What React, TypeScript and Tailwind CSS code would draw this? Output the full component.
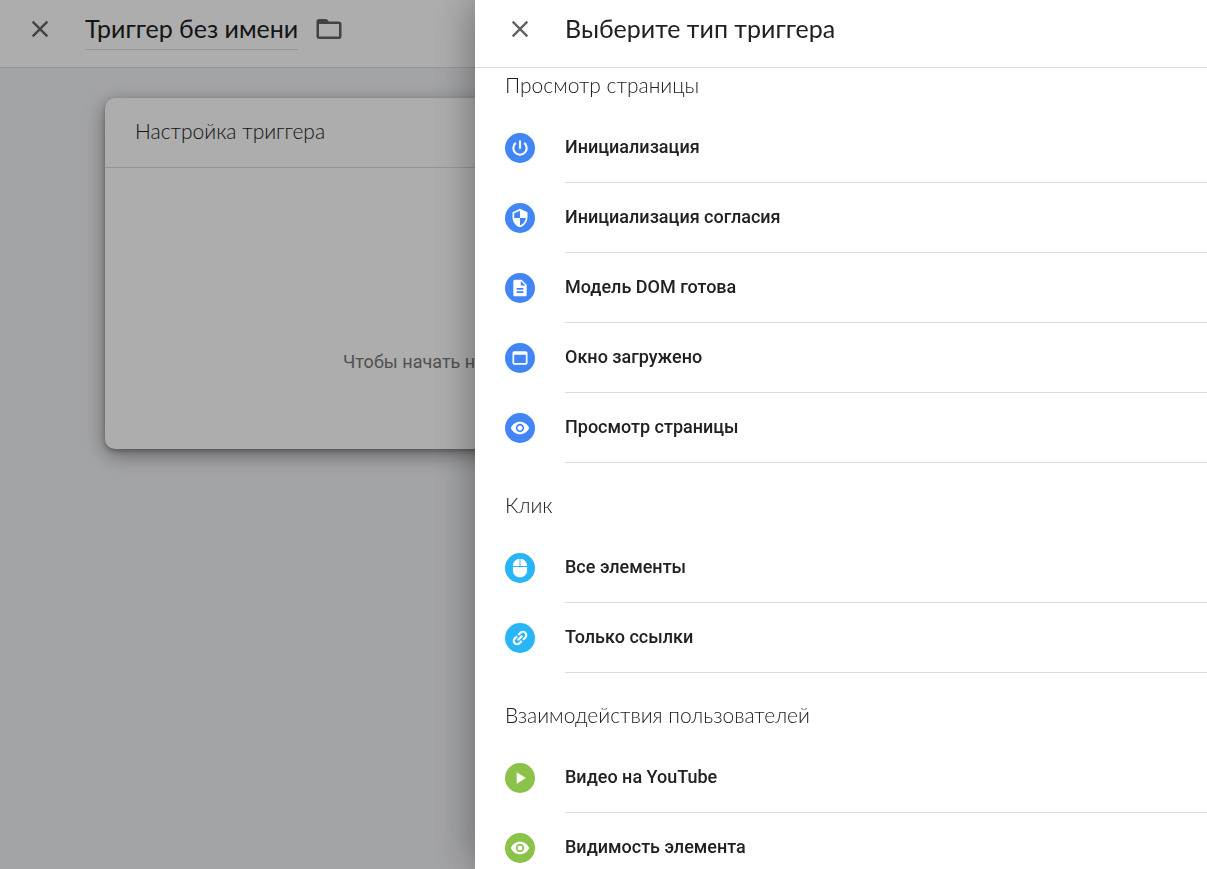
import React from "react";
import { IconType } from "react-icons";
import {
  MdClose,
  MdFolderOpen,
  MdPlayArrow,
  MdVisibility,
  MdWebAsset,
} from "react-icons/md";

interface TriggerType {
  label: string;
  icon: React.FC<{ className?: string }> | IconType;
}

interface TriggerGroup {
  title: string;
  color: string;
  types: TriggerType[];
}

const PowerIcon: React.FC<{ className?: string }> = ({ className }) => (
  <svg
    viewBox="0 0 24 24"
    fill="none"
    stroke="currentColor"
    strokeWidth="2.5"
    className={className}
  >
    <path d="M12 3v10M17.100 5.900A8 8 0 1 1 6.900 5.900" />
  </svg>
);

const ShieldIcon: React.FC<{ className?: string }> = ({ className }) => (
  <svg viewBox="0 0 24 24" fill="currentColor" className={className}>
    <path d="M12 1 3 5v6c0 5.55 3.84 10.74 9 12 5.16-1.26 9-6.45 9-12V5l-9-4zm0 10.99h7c-.53 4.12-3.28 7.79-7 8.94V12H5V6.3l7-3.11v8.8z" />
  </svg>
);

const DocumentIcon: React.FC<{ className?: string }> = ({ className }) => (
  <svg viewBox="0 0 24 24" fill="currentColor" className={className}>
    <path d="M14 2H6c-1.1 0-2 .9-2 2v16c0 1.1.9 2 2 2h12c1.1 0 2-.9 2-2V8l-6-6zm2 16H8v-2h8v2zm0-4H8v-2h8v2zm-3-5V3.5L18.5 9H13z" />
  </svg>
);

const MouseIcon: React.FC<{ className?: string }> = ({ className }) => (
  <svg viewBox="0 0 24 24" fill="currentColor" className={className}>
    <path d="M12.6 1v8.6h7.9C20.500 4.900 17 1.300 12.600 1zM3.500 15c0 4.600 3.700 8.200 8.500 8.200s8.500-3.600 8.500-8.200v-4.200h-17V15zM11.400 1C7 1.300 3.500 4.900 3.500 9.600h7.900V1z" />
  </svg>
);

const LinkIcon: React.FC<{ className?: string }> = ({ className }) => (
  <svg
    viewBox="0 0 24 24"
    fill="none"
    stroke="currentColor"
    strokeWidth="2.500"
    className={className}
  >
    <path
      d="M11 8H7a4 4 0 0 0 0 8h4M13 8h4a4 4 0 0 1 0 8h-4M8 12h8"
      transform="rotate(-45 12 12)"
    />
  </svg>
);

const groups: TriggerGroup[] = [
  {
    title: "Просмотр страницы",
    color: "bg-[#4285f4]",
    types: [
      { label: "Инициализация", icon: PowerIcon },
      { label: "Инициализация согласия", icon: ShieldIcon },
      { label: "Модель DOM готова", icon: DocumentIcon },
      { label: "Окно загружено", icon: MdWebAsset },
      { label: "Просмотр страницы", icon: MdVisibility },
    ],
  },
  {
    title: "Клик",
    color: "bg-[#29b6f6]",
    types: [
      { label: "Все элементы", icon: MouseIcon },
      { label: "Только ссылки", icon: LinkIcon },
    ],
  },
  {
    title: "Взаимодействия пользователей",
    color: "bg-[#8bc34a]",
    types: [
      { label: "Видео на YouTube", icon: MdPlayArrow },
      { label: "Видимость элемента", icon: MdVisibility },
    ],
  },
];

const TriggerRow: React.FC<{ type: TriggerType; color: string }> = ({
  type,
  color,
}) => {
  const Icon = type.icon;
  return (
    <li className="pl-[30px]">
      <button type="button" className="flex w-full items-start text-left">
        <span
          className={`mt-5 flex size-[30px] shrink-0 items-center justify-center rounded-full text-white ${color}`}
        >
          <Icon className="size-5" />
        </span>
        <span className="ml-[30px] flex h-[70px] flex-1 items-center border-b border-[#dadce0] pb-0.5 font-['Roboto',sans-serif] text-lg font-medium">
          {type.label}
        </span>
      </button>
    </li>
  );
};

// Trigger editor that stays behind the picker
const TriggerEditor = () => (
  <div className="min-h-screen bg-[#f1f2f5]">
    <header className="flex h-[68px] items-center border-b border-[#dadce0] bg-white pb-[10px] pl-[26px]">
      <button type="button" aria-label="Закрыть" className="text-[#5f6368]">
        <MdClose className="size-7" />
      </button>
      <input
        type="text"
        aria-label="Название триггера"
        defaultValue="Триггер без имени"
        className="ml-[31px] field-sizing-content h-[42px] border-b border-[#dadce0] bg-transparent text-[25px]"
      />
      <button type="button" aria-label="Папка" className="ml-4 text-[#5f6368]">
        <MdFolderOpen className="size-[30px]" />
      </button>
    </header>
    <main className="px-[105px] pt-[30px]">
      <section className="overflow-hidden rounded-[10px] bg-white shadow-[0_2px_4px_rgba(0,0,0,0.25),0_6px_20px_rgba(0,0,0,0.4)]">
        <h2 className="flex h-[70px] items-center border-b border-[#dadce0] px-[30px] pb-1 text-[21px] font-light">
          Настройка триггера
        </h2>
        <p className="pt-[180px] pb-[73px] pl-[238px] font-['Roboto',sans-serif] text-lg whitespace-nowrap text-[#777]">
          Чтобы начать н
        </p>
      </section>
    </main>
  </div>
);

const TriggerTypePicker = () => (
  <aside className="fixed inset-y-0 right-0 left-[475px] flex flex-col bg-white shadow-[0_0_40px_rgba(0,0,0,0.4)]">
    <header className="flex h-[68px] shrink-0 items-center border-b border-[#dadce0] pb-[10px] pl-[31px]">
      <button type="button" aria-label="Закрыть" className="text-[#5f6368]">
        <MdClose className="size-7" />
      </button>
      <h1 className="ml-[31px] text-[25px]">Выберите тип триггера</h1>
    </header>
    <div className="flex-1 overflow-hidden pt-px">
      {groups.map((group) => (
        <section key={group.title} className="pb-[26px]">
          <h2 className="pl-[30px] text-[21px] leading-8 font-light">
            {group.title}
          </h2>
          <ul className="pt-3">
            {group.types.map((type) => (
              <TriggerRow key={type.label} type={type} color={group.color} />
            ))}
          </ul>
        </section>
      ))}
    </div>
  </aside>
);

const App = () => (
  <div className="font-['Lato',sans-serif] text-[#202124]">
    <TriggerEditor />
    <div className="fixed inset-0 bg-black/32" />
    <TriggerTypePicker />
  </div>
);

export default App;
